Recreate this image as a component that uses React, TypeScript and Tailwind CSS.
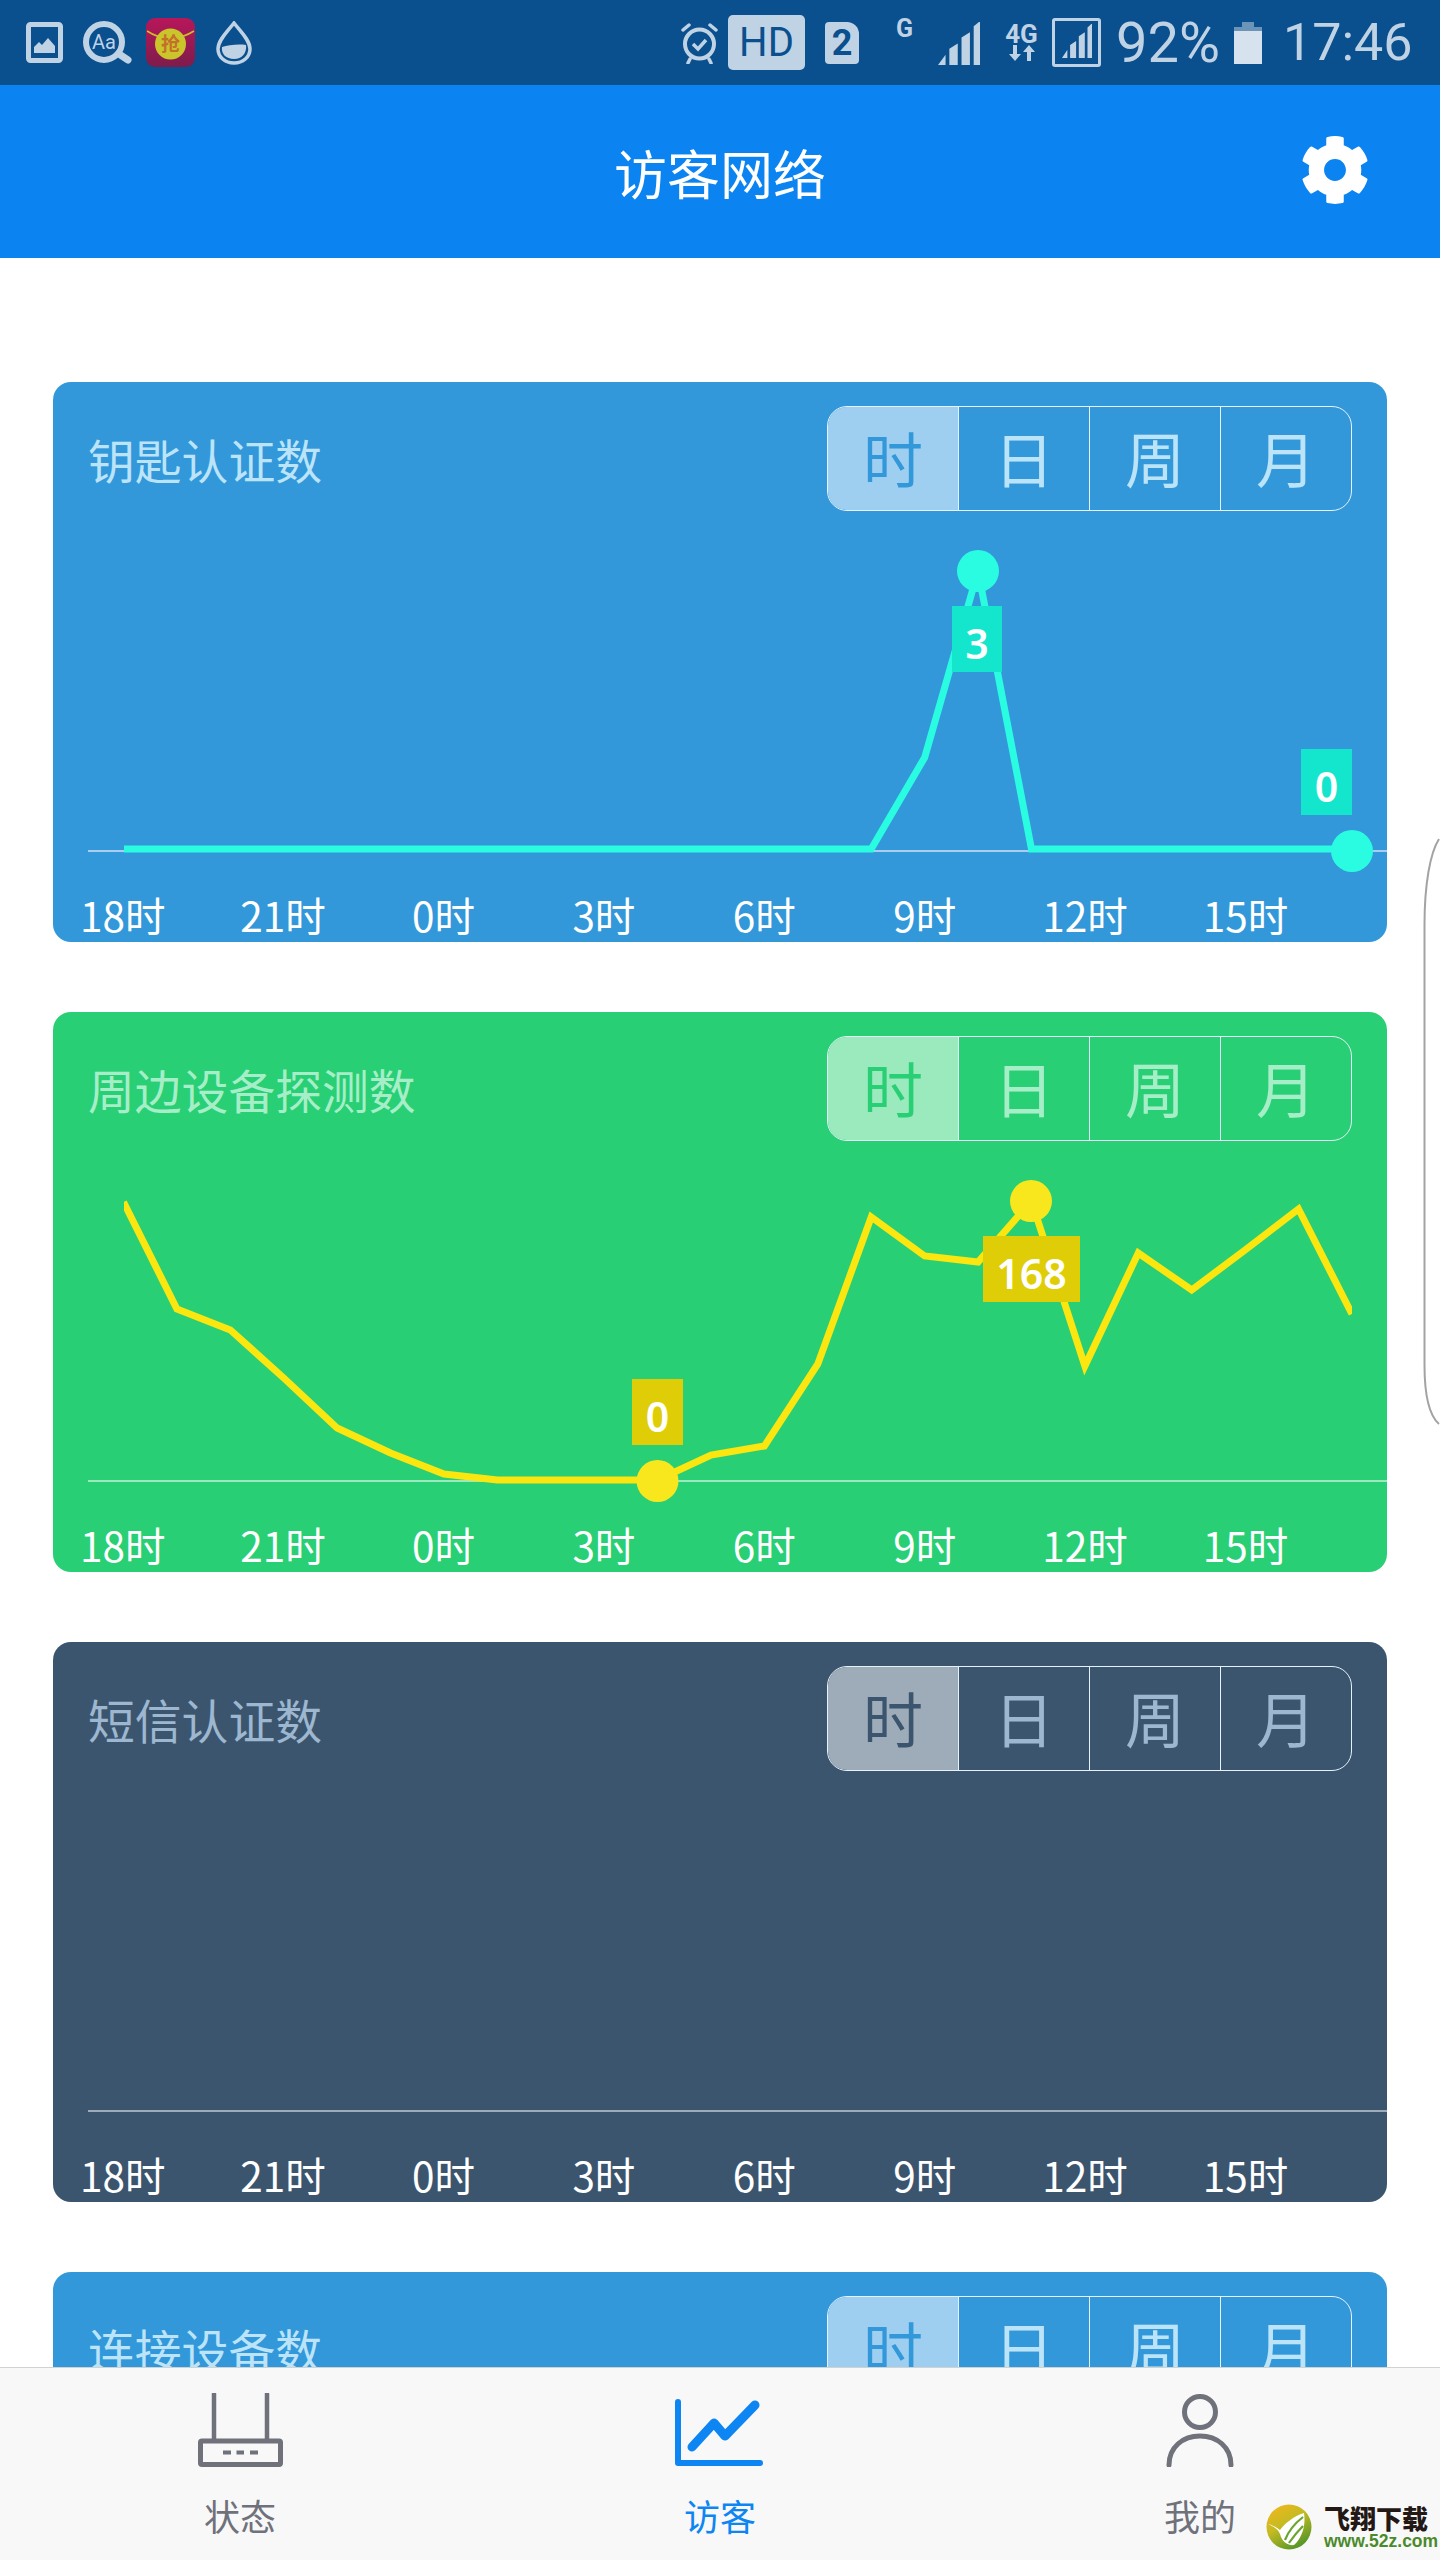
import React from "react";
import { FaCog } from "react-icons/fa";

const CJK = "font-['Noto_Sans_CJK_SC','Noto_Sans',sans-serif]";

type Tag = { text: string; pos: string };
type Theme = {
  title: string;
  card: string;
  titleColor: string;
  activeBg: string;
  activeText: string;
  segText: string;
  axis: string;
  line?: string;
  dot?: string;
  tagBg?: string;
  ys?: number[];
  dots?: [number, number][];
  tags?: Tag[];
};

const HOURS = ["18时", "21时", "0时", "3时", "6时", "9时", "12时", "15时"];
const SEGMENTS = ["时", "日", "周", "月"];

const px = (i: number) => 70.5 + 53.41 * i;
const flat = (a: Record<number, number>) =>
  Array.from({ length: 24 }, (_, i) => (a[i] !== undefined ? a[i] : 467));

const CARDS: Theme[] = [
  {
    title: "钥匙认证数",
    card: "bg-[#3298da]",
    titleColor: "text-[#bce4f9]",
    activeBg: "bg-[#9fcff0]",
    activeText: "text-[#3298da]",
    segText: "text-[#bce4f9]",
    axis: "#a9cdee",
    line: "#2afce2",
    dot: "#2afce2",
    tagBg: "bg-[#14e6cd]",
    ys: flat({ 15: 375.5, 16: 189 }),
    dots: [
      [925, 189],
      [1299, 469],
    ],
    tags: [
      { text: "3", pos: "left-[899px] top-[224px] w-[50px]" },
      { text: "0", pos: "left-[1248px] top-[367px] w-[51px]" },
    ],
  },
  {
    title: "周边设备探测数",
    card: "bg-[#28cf75]",
    titleColor: "text-[#a6eec7]",
    activeBg: "bg-[#9beabe]",
    activeText: "text-[#28cf75]",
    segText: "text-[#a6eec7]",
    axis: "#9beabe",
    line: "#fbe610",
    dot: "#f9e71e",
    tagBg: "bg-[#dfce07]",
    ys: [190, 297, 318, 366, 416, 441, 462, 468, 468, 468, 468, 443, 434, 352, 205, 244, 250, 189, 354, 241, 278, 238, 197, 302],
    dots: [
      [978, 189],
      [604.5, 469],
    ],
    tags: [
      { text: "168", pos: "left-[930px] top-[224px] w-[97px]" },
      { text: "0", pos: "left-[579px] top-[367px] w-[51px]" },
    ],
  },
  {
    title: "短信认证数",
    card: "bg-[#3c556e]",
    titleColor: "text-[#9db7d0]",
    activeBg: "bg-[#9eabb8]",
    activeText: "text-[#3c556e]",
    segText: "text-[#9db7d0]",
    axis: "#9eabb8",
  },
  {
    title: "连接设备数",
    card: "bg-[#3298da]",
    titleColor: "text-[#bce4f9]",
    activeBg: "bg-[#9fcff0]",
    activeText: "text-[#3298da]",
    segText: "text-[#bce4f9]",
    axis: "#a9cdee",
  },
];

function Chart({ t }: { t: Theme }) {
  const pts = t.ys ? t.ys.map((y, i) => `${px(i)},${y}`).join(" ") : "";
  return (
    <svg className="absolute left-0 top-0" width="1334" height="560" viewBox="0 0 1334 560" fill="none">
      <defs>
        <clipPath id="plot">
          <rect x="71" y="0" width="1228" height="560" />
        </clipPath>
      </defs>
      <line x1="35" y1="469" x2="1334" y2="469" stroke={t.axis} strokeWidth="2" />
      {t.ys && (
        <g clipPath="url(#plot)">
          <polyline points={pts} stroke={t.line} strokeWidth="7" strokeLinejoin="miter" />
        </g>
      )}
      {t.dots?.map(([x, y]) => (
        <circle key={x} cx={x} cy={y} r="21" fill={t.dot} />
      ))}
    </svg>
  );
}

function Card({ t }: { t: Theme }) {
  return (
    <section className={`relative flex h-[560px] w-[1334px] shrink-0 flex-col rounded-[18px] ${t.card}`}>
      <Chart t={t} />
      <div className="relative flex items-start justify-between pl-[35px] pr-[35px] pt-[24px]">
        <h2 className={`text-[46.8px] font-normal leading-[106px] ${t.titleColor}`}>{t.title}</h2>
        <div className="flex h-[105px] w-[525px] overflow-hidden rounded-[20px] border-[1.5px] border-[#e6f2fb]">
          {SEGMENTS.map((s, i) => (
            <div
              key={s}
              className={`flex flex-1 items-center justify-center pb-[3px] text-[60px] leading-[70px] ${i > 0 ? "border-l-[1.5px] border-[#e6f2fb]" : ""} ${
                i === 0 ? `${t.activeBg} ${t.activeText}` : t.segText
              }`}
            >
              {s}
            </div>
          ))}
        </div>
      </div>
      <div className="relative mt-auto -ml-[10.5px] flex h-[54px] items-center text-white">
        {HOURS.map((h) => (
          <span key={h} className="w-[160.4px] shrink-0 whitespace-nowrap text-center text-[40.5px] leading-[54px]">
            {h}
          </span>
        ))}
      </div>
      {t.tags?.map((g) => (
        <div
          key={g.text}
          className={`absolute flex h-[66px] items-center justify-center pt-[8px] font-['Noto_Sans',sans-serif] text-[41px] font-semibold leading-[50px] text-white ${g.pos} ${t.tagBg}`}
        >
          {g.text}
        </div>
      ))}
    </section>
  );
}

const INK = "#c0d3e5";

function Signal({ w, h }: { w: number; h: number }) {
  const p = (x1: number, x2: number, top: number) => `M${x1} ${100} L${x2} ${100} L${x2} ${top} L${x1} ${top + 12}Z`;
  return (
    <svg width={w} height={h} viewBox="0 0 100 100" preserveAspectRatio="none" fill={INK}>
      <path d="M0 100 L18 100 L18 76Z" />
      <path d={p(27, 47, 50)} />
      <path d={p(56, 76, 24)} />
      <path d={p(85, 100, -2)} />
    </svg>
  );
}

function StatusBar() {
  return (
    <header className={`flex h-[85px] shrink-0 items-center bg-[#0a4f8e] pl-[26px] font-['Roboto',sans-serif] text-[#c0d3e5]`}>
      <svg width="37" height="41" viewBox="0 0 37 41" className="mb-[1px]">
        <rect x="2.5" y="2.5" width="32" height="36" rx="2" fill="none" stroke={INK} strokeWidth="5" />
        <path d="M8 31 L8 25 L13 20 L16 23 L22 16 L29 24 L29 31Z" fill={INK} />
      </svg>
      <svg width="49" height="44" viewBox="0 0 49 44" className="ml-[20px]">
        <circle cx="21" cy="21" r="18" fill="none" stroke={INK} strokeWidth="6" />
        <path d="M36 33 L45 39" stroke={INK} strokeWidth="7" strokeLinecap="round" />
        <text x="21" y="28" textAnchor="middle" fontSize="20" fill={INK} fontFamily="Roboto, sans-serif">
          Aa
        </text>
      </svg>
      <svg width="49" height="49" viewBox="0 0 49 49" className="ml-[14px]">
        <defs>
          <linearGradient id="rp" x1="0" y1="0" x2="0" y2="1">
            <stop offset="0" stopColor="#b8175a" />
            <stop offset="1" stopColor="#7d1c4b" />
          </linearGradient>
        </defs>
        <rect width="49" height="49" rx="9" fill="url(#rp)" />
        <path d="M1 13 Q24 28 48 13" fill="none" stroke="#cdbe2a" strokeWidth="1.5" />
        <circle cx="24.5" cy="26" r="15.5" fill="#c9c52a" />
        <text x="24.5" y="33" textAnchor="middle" fontSize="19" fill="#c4702a" fontFamily="'Noto Sans CJK SC', sans-serif" fontWeight="700">
          抢
        </text>
      </svg>
      <svg width="36" height="44" viewBox="0 0 36 44" className="ml-[21px]">
        <path d="M18 2 C24 10 34 19 34 28 C34 36 27 42 18 42 C9 42 2 36 2 28 C2 19 12 10 18 2Z" fill="none" stroke={INK} strokeWidth="3.5" />
        <path d="M6 26 C12 24 22 23 30 24 C31 32 26 38 18 38 C10 38 5 33 6 26Z" fill={INK} />
      </svg>

      <svg width="37" height="42" viewBox="0 0 37 42" className="ml-[429px]">
        <circle cx="18.5" cy="22" r="14.5" fill="none" stroke={INK} strokeWidth="4" />
        <path d="M12 22 L17 27 L25 18" fill="none" stroke={INK} strokeWidth="3.5" />
        <path d="M2 8 L8 3 M35 8 L29 3 M9 37 L7 41 M28 37 L30 41" stroke={INK} strokeWidth="3.5" strokeLinecap="round" />
      </svg>
      <div className="ml-[10px] flex h-[55px] w-[77px] items-center justify-center rounded-[5px] bg-[#c0d3e5] text-[40px] leading-[48px] text-[#0a4f8e]">
        HD
      </div>
      <div className="relative ml-[20px] flex h-[42px] w-[34px] items-center justify-center rounded-[4px] rounded-tr-[12px] bg-[#c0d3e5] text-[36px] font-bold leading-[42px] text-[#0a4f8e]">
        2
      </div>
      <span className="mb-[28px] ml-[37px] w-[17px] text-[25px] font-bold leading-[26px]">G</span>
      <div className="ml-[25px] mt-[1px]">
        <Signal w={42} h={43} />
      </div>
      <div className="ml-[25px] flex w-[33px] flex-col items-center">
        <span className="whitespace-nowrap text-[26px] font-bold leading-[22px]">4G</span>
        <svg width="26" height="17" viewBox="0 0 26 17" fill={INK}>
          <path d="M4 0H8V9H12L6 16L0 9H4Z" />
          <path d="M18 16H22V7H26L20 0L14 7H18Z" />
        </svg>
      </div>
      <div className="ml-[14px] flex h-[49px] w-[49px] items-end justify-center rounded-[3px] border-[3px] border-[#c0d3e5] pb-[6px]">
        <Signal w={30} h={34} />
      </div>
      <span className="ml-[15px] w-[106px] whitespace-nowrap text-[56px] leading-[64px]">92%</span>
      <svg width="28" height="42" viewBox="0 0 28 42" className="ml-[12px]">
        <rect x="8" y="0" width="12" height="5" fill="#6c93b8" />
        <rect x="0" y="5" width="28" height="6" fill="#6c93b8" />
        <rect x="0" y="9" width="28" height="33" fill="#d6e2ee" />
      </svg>
      <span className="ml-[21px] whitespace-nowrap text-[52px] leading-[64px]">17:46</span>
    </header>
  );
}

function TitleBar() {
  return (
    <div className="relative flex h-[173px] shrink-0 items-center justify-center bg-[#0b84f1] text-white">
      <h1 className="text-[53px] font-normal leading-[70px]">访客网络</h1>
      <FaCog className="absolute left-[1300px] top-[50px] text-[70px]" />
    </div>
  );
}

function NavItem({ label, icon, color }: { label: string; icon: React.ReactNode; color: string }) {
  return (
    <div className={`flex flex-col items-center pt-[25px] ${color}`}>
      <div className="flex h-[74px] items-end">{icon}</div>
      <span className="mt-[27px] text-[36px] leading-[42px]">{label}</span>
    </div>
  );
}

function Watermark() {
  return (
    <div className="absolute left-[1266px] top-[135px] flex items-center">
      <svg width="46" height="46" viewBox="0 0 46 46">
        <defs>
          <linearGradient id="lf" x1="0.1" y1="0" x2="0.7" y2="1">
            <stop offset="0" stopColor="#f4b71c" />
            <stop offset="0.45" stopColor="#c4bb22" />
            <stop offset="1" stopColor="#4f9428" />
          </linearGradient>
        </defs>
        <circle cx="23" cy="23" r="22.5" fill="url(#lf)" />
        <path d="M2 20 C8 23 12 25 14 30 C16 38 22 42 28 41 C36 34 40 22 38 9 C28 12 18 20 14 26 C11 24 7 21 2 20Z" fill="#fff" />
        <path d="M19 36 C22 28 28 20 37 13 M23 39 C27 33 32 27 37 22" stroke="#6aa52c" strokeWidth="2.2" fill="none" />
      </svg>
      <div className="ml-[12px] flex w-[106px] flex-col">
        <span className="whitespace-nowrap text-[26px] font-black leading-[30px] text-[#231815]">飞翔下载</span>
        <span className="mt-[-2px] whitespace-nowrap font-['Liberation_Sans',sans-serif] text-[17.5px] font-bold leading-[20px] text-[#4a8a2b]">
          www.52z.com
        </span>
      </div>
    </div>
  );
}

function BottomNav() {
  return (
    <nav className="relative grid h-[193px] shrink-0 grid-cols-3 border-t-[1.5px] border-[#d2d2d2] bg-[#f8f8f8]">
      <NavItem
        label="状态"
        color="text-[#6f717b]"
        icon={
          <svg width="85" height="74" viewBox="0 0 85 74" fill="none" stroke="currentColor">
            <path d="M16 1 V47 M69 1 V47" strokeWidth="4.5" strokeLinecap="round" />
            <rect x="2.5" y="48" width="80" height="23.5" rx="1.5" strokeWidth="5" />
            <path d="M25 59.5 H33 M38.5 59.5 H46 M52 59.5 H60" strokeWidth="4" />
          </svg>
        }
      />
      <NavItem
        label="访客"
        color="text-[#0d85f2]"
        icon={
          <svg width="90" height="74" viewBox="0 0 90 74" fill="none" stroke="currentColor" strokeLinecap="round" strokeLinejoin="round">
            <path d="M3 9 V70 H85" strokeWidth="6" />
            <path d="M17 54 L39 30 L50 43 L80 12" strokeWidth="9" />
          </svg>
        }
      />
      <NavItem
        label="我的"
        color="text-[#6f717b]"
        icon={
          <svg width="68" height="74" viewBox="0 0 68 74" fill="none" stroke="currentColor" strokeWidth="5" strokeLinecap="round">
            <circle cx="34" cy="19" r="15.5" />
            <path d="M3 72 C3 54 17 43 34 43 C51 43 65 54 65 72" />
          </svg>
        }
      />
      <Watermark />
    </nav>
  );
}

function EdgeHandle() {
  return (
    <svg className="absolute left-[1419px] top-[835px]" width="21" height="592" viewBox="0 0 21 592" fill="none">
      <path d="M20 4 C11 18 5.5 50 5.5 90 L5.5 530 C5.5 565 12 582 20 589" stroke="#a3a3a3" strokeWidth="2" />
    </svg>
  );
}

export default function App() {
  return (
    <div className={`relative flex h-[2560px] w-[1440px] flex-col overflow-hidden bg-white ${CJK}`}>
      <StatusBar />
      <TitleBar />
      <main className="flex min-h-0 flex-1 flex-col gap-[70px] overflow-hidden pl-[53px] pt-[124px]">
        {CARDS.map((t) => (
          <Card key={t.title} t={t} />
        ))}
      </main>
      <BottomNav />
      <EdgeHandle />
    </div>
  );
}
